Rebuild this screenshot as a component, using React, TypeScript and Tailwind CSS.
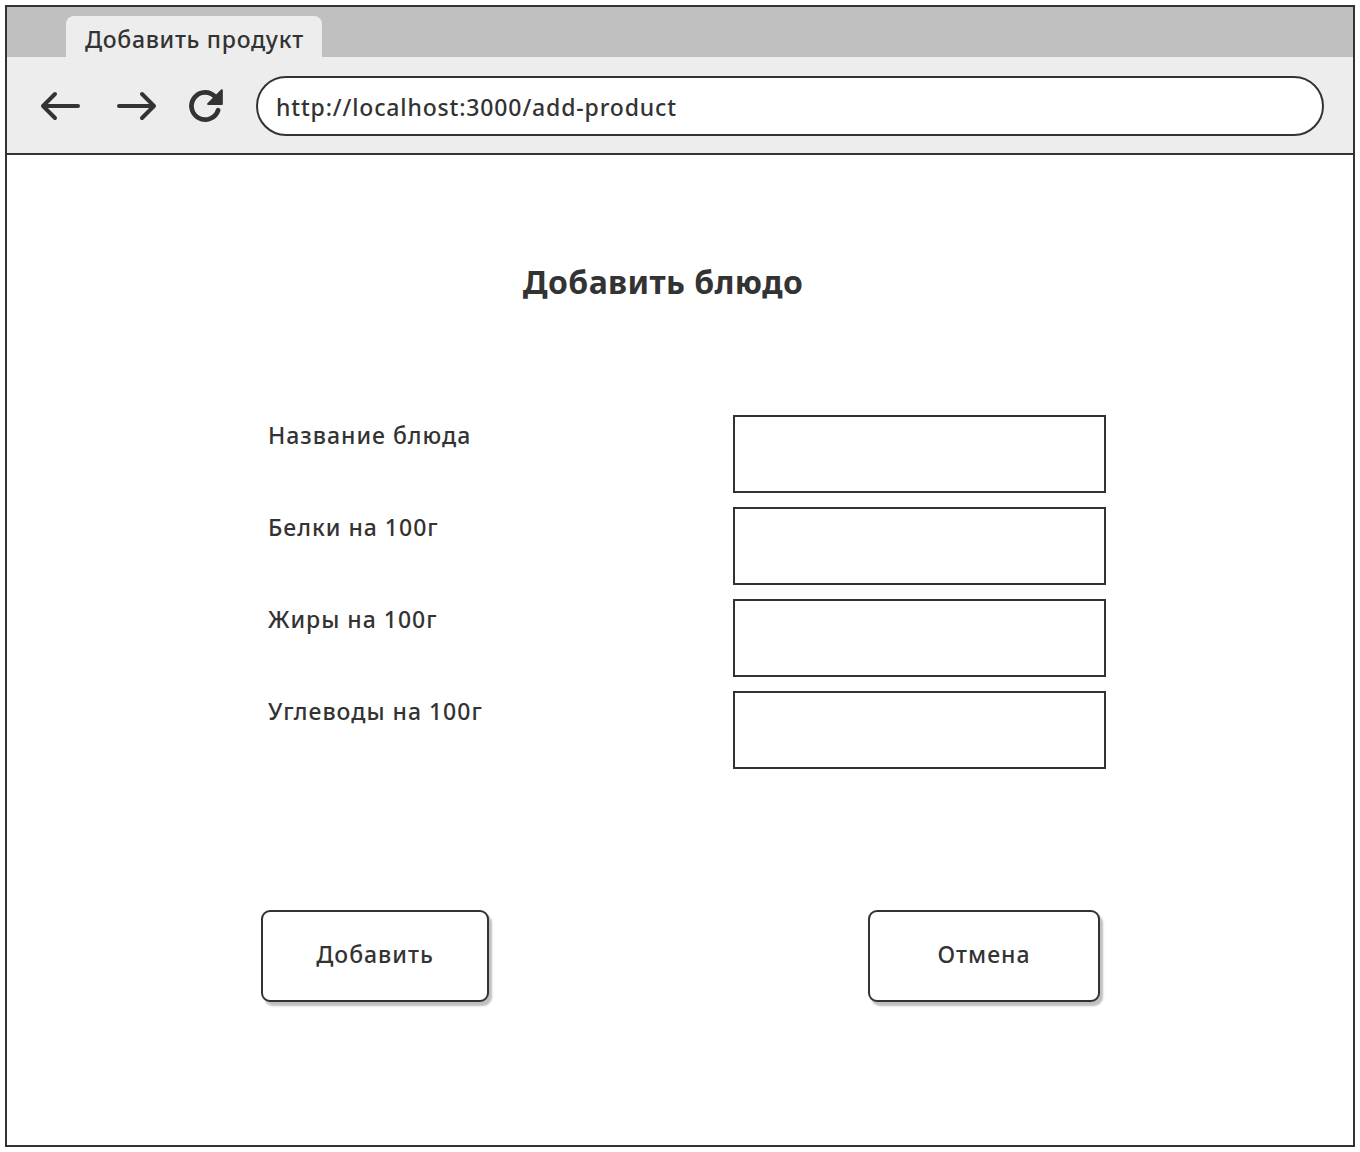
import React from "react";

const ink = "#333333";

function BackIcon() {
  return (
    <svg width="44" height="34" viewBox="0 0 44 34" fill="none">
      <path d="M40 17H5M17 5L5 17l12 12" stroke={ink} strokeWidth="4" strokeLinecap="round" strokeLinejoin="round" />
    </svg>
  );
}

function ForwardIcon() {
  return (
    <svg width="44" height="34" viewBox="0 0 44 34" fill="none">
      <path d="M4 17h35M27 5l12 12-12 12" stroke={ink} strokeWidth="4" strokeLinecap="round" strokeLinejoin="round" />
    </svg>
  );
}

function ReloadIcon() {
  return (
    <svg width="42" height="42" viewBox="0 0 40 40" fill="none">
      <path d="M30 11.5A13 13 0 1 0 32.5 24" stroke={ink} strokeWidth="4.5" strokeLinecap="round" />
      <path d="M36 5v13H23z" fill={ink} stroke={ink} strokeWidth="2" strokeLinejoin="round" />
    </svg>
  );
}

const fields = ["Название блюда", "Белки на 100г", "Жиры на 100г", "Углеводы на 100г"];

export default function App() {
  return (
    <div
      className="h-[1152px] w-[1360px] bg-white p-[5px] text-[#333]"
      style={{ fontFamily: '"Noto Sans", "Open Sans", sans-serif' }}
    >
      <div className="flex h-[1142px] w-[1350px] flex-col border-2 border-[#333]">
        {/* tab strip */}
        <div className="flex h-[50px] shrink-0 items-end bg-[#c0c0c0] pl-[59px]">
          <div className="flex h-[41px] w-[256px] items-center rounded-t-[8px] bg-[#ededed] pl-[19px] pt-[5px] text-[23px] font-medium leading-none tracking-[0.7px]">
            Добавить продукт
          </div>
        </div>

        {/* toolbar */}
        <div className="flex h-[98px] shrink-0 items-center border-b-2 border-[#333] bg-[#ededed] pl-[31px] pr-[29px] pt-[2px]">
          <BackIcon />
          <div className="ml-[33px]">
            <ForwardIcon />
          </div>
          <div className="ml-[25px]">
            <ReloadIcon />
          </div>
          <div className="ml-[30px] flex h-[60px] flex-1 items-center rounded-full border-2 border-[#333] bg-white pl-[18px] pt-[2px] text-[23px] font-medium tracking-[0.85px]">
            http://localhost:3000/add-product
          </div>
        </div>

        {/* page */}
        <div className="flex flex-1 flex-col">
          <h1 className="mt-[109px] pr-[34px] text-center text-[32px] font-bold leading-[36px] tracking-[0.4px]">
            Добавить блюдо
          </h1>

          <div className="mt-[115px] flex flex-col gap-[14px] pl-[261px]">
            {fields.map((label) => (
              <div key={label} className="flex items-start">
                <div className="w-[465px] pt-[5px] text-[23px] font-medium leading-[30px] tracking-[1px]">{label}</div>
                <div className="h-[78px] w-[373px] border-2 border-[#333]" />
              </div>
            ))}
          </div>

          <div className="mt-[141px] flex pl-[254px]">
            <button className="flex h-[92px] w-[228px] items-center justify-center rounded-[9px] border-2 border-[#333] bg-white pb-[3px] text-[23px] font-medium tracking-[1px] shadow-[3px_4px_2px_rgba(0,0,0,0.25)]">
              Добавить
            </button>
            <button className="ml-[379px] flex h-[92px] w-[232px] items-center justify-center rounded-[9px] border-2 border-[#333] bg-white pb-[3px] text-[23px] font-medium tracking-[1px] shadow-[3px_4px_2px_rgba(0,0,0,0.25)]">
              Отмена
            </button>
          </div>
        </div>
      </div>
    </div>
  );
}
